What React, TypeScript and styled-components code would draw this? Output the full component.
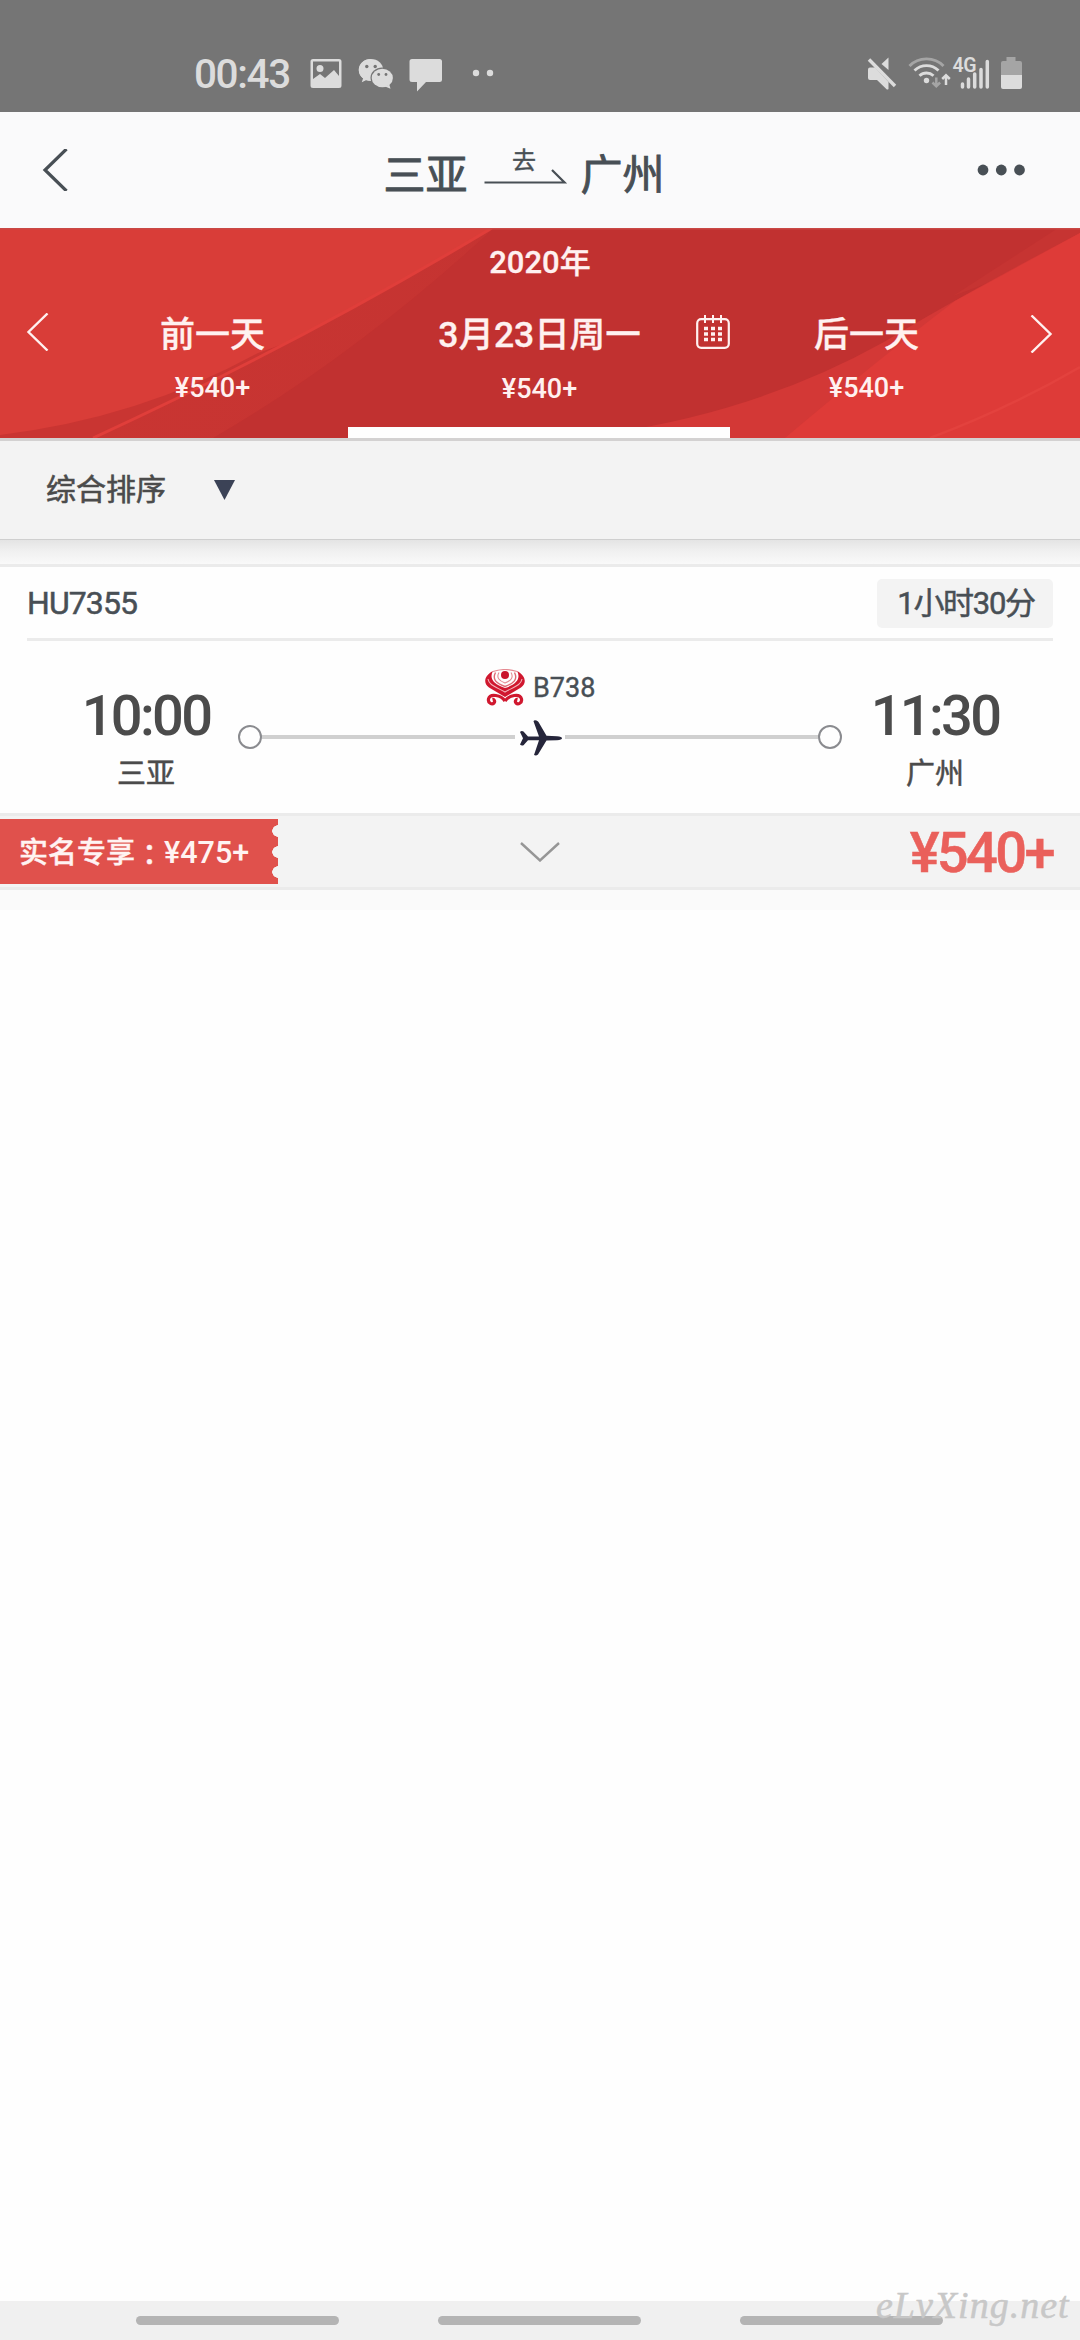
import React from "react";
import styled, { createGlobalStyle } from "styled-components";

const GlobalStyle = createGlobalStyle`
  * { box-sizing: border-box; }
  html, body { margin: 0; padding: 0; background: #fefefe; }
  body { font-family: Roboto, "Noto Sans CJK SC", sans-serif; color: #484f55; }
  svg { display: block; flex: none; }
`;

const Screen = styled.div`
  width: 1080px;
  height: 2340px;
  display: flex;
  flex-direction: column;
  overflow: hidden;
`;

/* One line of text with its weight, size and tracking. */
const Label = styled.span<{ $size: number; $weight?: number; $track?: number; $color?: string; $stroke?: number }>`
  display: block;
  white-space: nowrap;
  line-height: 1;
  font-size: ${(p) => p.$size}px;
  font-weight: ${(p) => p.$weight ?? 400};
  letter-spacing: ${(p) => p.$track ?? 0}px;
  color: ${(p) => p.$color ?? "inherit"};
  -webkit-text-stroke: ${(p) => p.$stroke ?? 0}px currentColor;
`;

const StatusBar = styled.header`
  height: 112px;
  flex: none;
  padding: 54px 58px 0 194px;
  display: flex;
  justify-content: space-between;
  background: #757575;
  color: #dcdcdc;
`;

const StatusGroup = styled.div`
  display: flex;
  height: 40px;
  align-items: center;
`;

const Clock = styled(Label)`
  width: 116px;
`;

const TitleBar = styled.div`
  height: 116px;
  flex: none;
  padding: 0 55px 0 42px;
  display: flex;
  align-items: center;
  justify-content: space-between;
  background: #fafafb;
`;

const Route = styled.h1`
  margin: 11px 0 0 3px;
  display: flex;
  align-items: center;
  gap: 15px;
  font-weight: 400;
`;

const Direction = styled.div`
  width: 83px;
  display: flex;
  flex-direction: column;
  align-items: center;
  margin-top: -17px;
`;

const DateBar = styled.section`
  position: relative;
  height: 210px;
  flex: none;
  display: flex;
  flex-direction: column;
  color: #fff1f0;
  background: #d93d38;
`;

const Backdrop = styled.svg`
  position: absolute;
  inset: 0;
`;

const Year = styled.div`
  position: relative;
  height: 70px;
  padding-top: 19px;
  display: flex;
  justify-content: center;
`;

const DateRow = styled.div`
  position: relative;
  flex: 1;
  display: grid;
  grid-template-columns: 49px 327px 327px 327px 50px;
`;

const DateCell = styled.div`
  position: relative;
  display: flex;
  flex-direction: column;
  align-items: center;
  padding-top: 20px;
  gap: 22px;
`;

const ArrowCell = styled.div<{ $left: number; $top: number }>`
  padding: ${(p) => p.$top}px 0 0 ${(p) => p.$left}px;
`;

const CalendarButton = styled.div`
  position: absolute;
  left: 319px;
  top: 16px;
`;

const Underline = styled.div`
  position: relative;
  height: 11px;
  width: 382px;
  margin-left: 348px;
  background: #fefefe;
`;

const SortBar = styled.div`
  height: 102px;
  flex: none;
  padding: 0 46px;
  display: flex;
  align-items: center;
  gap: 48px;
  background: #f3f3f3;
  border-top: 3px solid #d3d1d1;
  border-bottom: 1px solid #cfcfcf;
  color: #4b4b4b;
`;

const Shade = styled.div`
  height: 24px;
  flex: none;
  background: linear-gradient(#e4e4e4, #f0f0f0 45%, #f9f9f9);
`;

const Card = styled.article`
  height: 326px;
  flex: none;
  display: flex;
  flex-direction: column;
  background: #fefefe;
  border-top: 3px solid #ebebeb;
  border-bottom: 3px solid #ebebeb;
`;

const CardHead = styled.div`
  height: 74px;
  margin: 0 27px;
  display: flex;
  align-items: center;
  justify-content: space-between;
  border-bottom: 3px solid #ebebeb;
`;

const Duration = styled.div`
  width: 176px;
  height: 49px;
  margin-top: 1px;
  padding: 1px 0 0 2px;
  border-radius: 5px;
  display: flex;
  align-items: center;
  justify-content: center;
  background: #f3f3f3;
`;

const Leg = styled.div`
  height: 172px;
  display: grid;
  grid-template-columns: 238px 604px 238px;
`;

const Stop = styled.div<{ $pad: number }>`
  display: flex;
  flex-direction: column;
  align-items: center;
  width: 188px;
  margin-left: ${(p) => p.$pad}px;
  padding-top: 47px;
  gap: 16px;
  color: #4b4b4b;
`;

const Track = styled.div`
  padding-top: 26px;
`;

const Aircraft = styled.div`
  height: 40px;
  padding-left: 247px;
  display: flex;
  align-items: center;
  gap: 8px;
`;

const Model = styled(Label)`
  padding-top: 3px;
`;

const Line = styled.div`
  margin-top: 12px;
  height: 36px;
  display: flex;
  align-items: center;
`;

const Dot = styled.i`
  width: 24px;
  height: 24px;
  flex: none;
  border: 2px solid #8a8b8f;
  border-radius: 50%;
`;

const Rule = styled.i`
  flex: 1;
  height: 4px;
  background: #d0d0d0;
`;

const PlaneSlot = styled.div`
  width: 50px;
  padding: 2px 0 0 4px;
`;

const Fare = styled.div`
  height: 74px;
  border-top: 3px solid #ebebeb;
  background: #f3f3f3;
  display: grid;
  grid-template-columns: 1fr 40px 1fr;
  align-items: center;
`;

const Coupon = styled.div`
  width: 278px;
  height: 65px;
  padding: 4px 0 0 19px;
  display: flex;
  align-items: center;
  color: #fff3f2;
  background: radial-gradient(circle at 278px 12px, #f3f3f3 5.5px, transparent 6px),
    radial-gradient(circle at 278px 33px, #f3f3f3 5.5px, transparent 6px),
    radial-gradient(circle at 278px 53px, #f3f3f3 5.5px, transparent 6px),
    #e0514c;
`;

/* The Traditional face centres the full-width colon in its cell. */
const Colon = styled(Label)`
  font-family: "Noto Sans CJK TC", sans-serif;
`;

const Price = styled.div`
  display: flex;
  justify-content: flex-end;
  padding: 3px 27px 0 0;
`;

const Footing = styled.div`
  height: 20px;
  flex: none;
  background: #fafafa;
`;

const Blank = styled.main`
  flex: 1;
  background: #fefefe;
`;

const NavBar = styled.nav`
  position: relative;
  height: 39px;
  flex: none;
  display: flex;
  gap: 99px;
  padding: 15px 0 0 136px;
  background: #f0f0f0;
`;

const NavPill = styled.i`
  width: 203px;
  height: 9px;
  border-radius: 5px;
  background: #b4b4b4;
`;

const Watermark = styled.span`
  position: absolute;
  left: 876px;
  top: -18px;
  font: italic 38px/44px "Liberation Serif", serif;
  letter-spacing: 1px;
  color: #c8c8c8;
  -webkit-text-stroke: 0.5px #c8c8c8;
`;

const StatusIcons = () => (
  <svg width="140" height="40" viewBox="310 54 140 40" fill="#dcdcdc">
    <path fillRule="evenodd" d="M313 59h26a2.5 2.5 0 0 1 2.500 2.500v24a2.500 2.500 0 0 1-2.500 2.500h-26a2.500 2.500 0 0 1-2.500-2.500v-24a2.500 2.500 0 0 1 2.500-2.500zM313 61.500v17.500l7-5 5 4 9-8 5 6v-14.500zM320 65a3.500 3.500 0 1 1 0 7a3.500 3.500 0 0 1 0-7z" />
    <path d="M371 59c-7 0-12.200 4.800-12.200 11 0 3.400 1.700 6.300 4.300 8.300l-1.300 4 4.600-2.400c1.300.4 2.700.7 4.300.7z" />
    <ellipse cx="371" cy="70" rx="12.200" ry="10.900" />
    <ellipse cx="382.300" cy="77.800" rx="11.800" ry="10.400" fill="#757575" />
    <ellipse cx="382.300" cy="78" rx="10.600" ry="9.300" />
    <path d="M385 86.500l5.500 2.200-1.200-4.200z" />
    <g fill="#757575">
      <circle cx="366.800" cy="66.500" r="1.700" />
      <circle cx="375.200" cy="66.500" r="1.700" />
      <circle cx="378.700" cy="74.500" r="1.400" />
      <circle cx="386" cy="74.500" r="1.400" />
    </g>
    <path d="M412 59h27.500a2.500 2.500 0 0 1 2.500 2.500v18a2.500 2.500 0 0 1-2.500 2.500H426l-9 9.500V82h-5a2.500 2.500 0 0 1-2.500-2.500v-18a2.500 2.500 0 0 1 2.500-2.500z" />
  </svg>
);

const MoreDots = () => (
  <svg width="50" height="40" viewBox="450 54 50 40" fill="#dcdcdc">
    <circle cx="476" cy="73" r="3.200" />
    <circle cx="490" cy="73" r="3.200" />
  </svg>
);

const SignalIcons = () => (
  <svg width="155" height="40" viewBox="867 54 155 40" fill="#dcdcdc">
    <path d="M888.500 57.500V70l-7-6z" />
    <path d="M868 69.500q0-2 2-2h5L888.500 82v7q-1 1-2.200 0L877 80h-7q-2 0-2-2z" />
    <path d="M870.500 57.800L897 84" stroke="#757575" strokeWidth="2.400" />
    <path d="M869 59.500L895 86" stroke="#dcdcdc" strokeWidth="3.400" />
    <g fill="none" strokeWidth="2.900">
      <path d="M909.500 66c9-9.500 25-9.500 34 0" stroke="#a5a5a5" />
      <path d="M914.500 70.500c7-6.500 17-6.500 24 0" stroke="#dcdcdc" />
      <path d="M919.500 75.800c4-3.700 10-3.700 14 0" stroke="#dcdcdc" />
      <path d="M936.300 77.500v8.500m-3.800-3.500l3.800 3.800 3.800-3.800" stroke="#a5a5a5" strokeWidth="2.500" />
      <path d="M946 85v-9m-3.800 3l3.800-3.800 3.800 3.800" stroke="#dcdcdc" strokeWidth="2.500" />
    </g>
    <circle cx="926.500" cy="80.500" r="2.700" />
    <path d="M962.500 84v3M968.500 79v8M974.700 74v13M981 69.500v17.500M987.300 61.500v25.500" stroke="#dcdcdc" strokeWidth="3.500" strokeLinecap="round" />
    <text x="952.500" y="71.500" fontFamily="Roboto, sans-serif" fontSize="19.500" fontWeight="600" letterSpacing="-0.500">4G</text>
    <path d="M1006.500 57h9v4h4.500a2 2 0 0 1 2 2v12h-21V63a2 2 0 0 1 2-2h3.500z" fill="#a5a5a5" />
    <path d="M1001 75h21v12a2 2 0 0 1-2 2h-17a2 2 0 0 1-2-2z" />
  </svg>
);

const Swoosh = () => (
  <Backdrop width="1080" height="210" viewBox="0 0 1080 210">
    <defs>
      <linearGradient id="mid" x1="0" x2="1">
        <stop offset="0" stopColor="#c93532" />
        <stop offset="1" stopColor="#c33331" />
      </linearGradient>
    </defs>
    <path d="M0 207Q140 190 258 125L300 110V210H0z" fill="#c93532" />
    <path d="M492 0Q300 115 93 210H620L700 0z" fill="url(#mid)" />
    <path d="M492 0Q300 115 93 210" fill="none" stroke="#e03e3a" strokeWidth="3" />
    <path d="M494 0Q355 128 213 210H1080V0z" fill="#c13130" />
    <path d="M1058 0L953 68 1080 20V0z" fill="#c63432" />
    <path d="M1080 5Q960 68 884 114Q760 183 610 205L590 210H1080z" fill="#d33836" />
    <path d="M1080 5L955 73Q880 130 785 210H1080z" fill="#de3b38" />
    <path d="M1080 139Q1010 180 930 210" fill="none" stroke="#e3423e" strokeWidth="2.500" />
    <path d="M0 .75H1080" stroke="#c94845" strokeWidth="1.500" />
  </Backdrop>
);

const Calendar = () => (
  <svg width="36" height="36" viewBox="0 0 36 36" fill="none" stroke="#fff1f0">
    <rect x="2.200" y="5.200" width="31.600" height="28.600" rx="4" strokeWidth="2.200" />
    <path d="M10 1v8M18 1v8M26 1v8" strokeWidth="2" />
    <path d="M9 14.500h18M9 20h18M9 25.500h18" strokeWidth="3.600" strokeDasharray="4 3" />
  </svg>
);

const AirlineLogo = () => (
  <svg width="40" height="37" viewBox="0 0 40 37" fill="none">
    <path d="M8 2C-1 7-2 14 4 18.500L20 28l16-9.500C42 14 41 7 32 2c4 7 0 13.500-12 17C8 15.500 4 9 8 2z" fill="#d0182f" />
    <path d="M3 10c1 6 7 7.500 17 13 10-5.500 16-7 17-13" stroke="#f3b5ba" strokeWidth="1.100" />
    <path d="M10.500 3.500C7 10.500 11 14 20 17.500 29 14 33 10.500 29.500 3.500" stroke="#df6a74" strokeWidth="1.400" />
    <path d="M14 3.500c-3 5 0 8 6 10.500 6-2.500 9-5.500 6-10.500" stroke="#e58a92" strokeWidth="1.100" />
    <path d="M8 2.500Q20-1.500 32 2.500" stroke="#e58a92" strokeWidth="1.100" />
    <circle cx="20" cy="6" r="4" fill="#c9142c" />
    <path d="M20 32C16 26 5 24 3.500 30c-.8 4 3.500 6 5.500 4 1.500-1.800 0-3.800-1.500-3.500M20 32c4-6 15-8 16.500-2 .8 4-3.500 6-5.500 4-1.500-1.800 0-3.800 1.500-3.500" stroke="#d0182f" strokeWidth="3.200" />
  </svg>
);

const Plane = () => (
  <svg width="43" height="36" viewBox="0 0 43 36" fill="#25253a">
    <path d="M14.500 1.200Q15-.2 17.500.5Q19 1 19.500 2L27.500 15.800 38 16.200q5 .5 5 2T38 20.200l-10.500.3L19 34.500q-1.800 1.700-4 .5L20 20.200H9l-4.500 5q-2 .8-3.500-.7L4 18.200 1 12q1.500-1.500 3.500-.5L9 16.400h11z" />
  </svg>
);

export default function App() {
  return (
    <Screen>
      <GlobalStyle />
      <StatusBar>
        <StatusGroup>
          <Clock $size={40.500} $weight={500} $track={-1.400}>00:43</Clock>
          <StatusIcons />
          <MoreDots />
        </StatusGroup>
        <StatusGroup>
          <SignalIcons />
        </StatusGroup>
      </StatusBar>

      <TitleBar>
        <svg width="26" height="42" viewBox="0 0 26 42" fill="none" stroke="#484f55" strokeWidth="3.200">
          <path d="M24.500 0L3 21l21.500 21" />
        </svg>
        <Route>
          <Label $size={42} $stroke={0.9}>三亚</Label>
          <Direction>
            <Label $size={24} $stroke={0.4}>去</Label>
            <svg width="83" height="13" viewBox="-1.5 4 83 13" fill="none" stroke="#484f55" strokeWidth="2.200" overflow="visible">
              <path d="M0 13.500h80L67.500 1" />
            </svg>
          </Direction>
          <Label $size={42} $stroke={0.9}>广州</Label>
        </Route>
        <svg width="48" height="12" viewBox="0 0 48 12" fill="#484f55">
          <circle cx="6" cy="6" r="5.400" />
          <circle cx="24.300" cy="6" r="5.400" />
          <circle cx="42.500" cy="6" r="5.400" />
        </svg>
      </TitleBar>

      <DateBar>
        <Swoosh />
        <Year>
          <Label $size={31} $weight={500} $stroke={0.3}>2020年</Label>
        </Year>
        <DateRow>
          <ArrowCell $left={26} $top={15}>
            <svg width="23" height="38" viewBox="0 0 23 38" fill="none" stroke="#fff1f0" strokeWidth="2.400">
              <path d="M21.500.5L2.500 19l19 18.500" />
            </svg>
          </ArrowCell>
          <DateCell>
            <Label $size={35} $weight={500} $stroke={0.3}>前一天</Label>
            <Label $size={27} $weight={500}>¥540+</Label>
          </DateCell>
          <DateCell>
            <Label $size={35.500} $weight={500} $stroke={0.3}>3月23日周一</Label>
            <Label $size={27} $weight={500}>¥540+</Label>
            <CalendarButton><Calendar /></CalendarButton>
          </DateCell>
          <DateCell>
            <Label $size={35} $weight={500} $stroke={0.3}>后一天</Label>
            <Label $size={27} $weight={500}>¥540+</Label>
          </DateCell>
          <ArrowCell $left={0} $top={17}>
            <svg width="23" height="38" viewBox="0 0 23 38" fill="none" stroke="#fff1f0" strokeWidth="2.400">
              <path d="M1.500.5l19 18.500-19 18.500" />
            </svg>
          </ArrowCell>
        </DateRow>
        <Underline />
      </DateBar>

      <SortBar>
        <Label $size={30} $stroke={0.6}>综合排序</Label>
        <svg width="21" height="20" viewBox="0 0 21 20" fill="#3b4256">
          <path d="M0 0h21L10.500 20z" />
        </svg>
      </SortBar>
      <Shade />

      <Card>
        <CardHead>
          <Label $size={32} $stroke={0.5} $track={-0.900}>HU7355</Label>
          <Duration>
            <Label $size={31} $stroke={0.5} $track={-1.300}>1小时30分</Label>
          </Duration>
        </CardHead>
        <Leg>
          <Stop $pad={52}>
            <Label $size={56} $weight={500} $track={-2.700}>10:00</Label>
            <Label $size={29} $stroke={0.5}>三亚</Label>
          </Stop>
          <Track>
            <Aircraft>
              <AirlineLogo />
              <Model $size={27} $stroke={0.4}>B738</Model>
            </Aircraft>
            <Line>
              <Dot />
              <Rule />
              <PlaneSlot><Plane /></PlaneSlot>
              <Rule />
              <Dot />
            </Line>
          </Track>
          <Stop $pad={-1}>
            <Label $size={56} $weight={500} $track={-2.700}>11:30</Label>
            <Label $size={29} $stroke={0.5}>广州</Label>
          </Stop>
        </Leg>
        <Fare>
          <Coupon>
            <Label $size={29} $weight={500} $stroke={0.4}>实名专享</Label>
            <Colon $size={29} $weight={500} $stroke={0.4}>：</Colon>
            <Label $size={30.500} $weight={500}>¥475+</Label>
          </Coupon>
          <svg width="40" height="20" viewBox="0 0 40 20" fill="none" stroke="#969696" strokeWidth="2.400">
            <path d="M1 1l19 17.500L39 1" />
          </svg>
          <Price>
            <Label $size={56} $weight={500} $track={-2.600} $stroke={0.5} $color="#ea605b">¥540+</Label>
          </Price>
        </Fare>
      </Card>
      <Footing />
      <Blank />
      <NavBar>
        <NavPill />
        <NavPill />
        <NavPill />
        <Watermark>eLvXing.net</Watermark>
      </NavBar>
    </Screen>
  );
}
